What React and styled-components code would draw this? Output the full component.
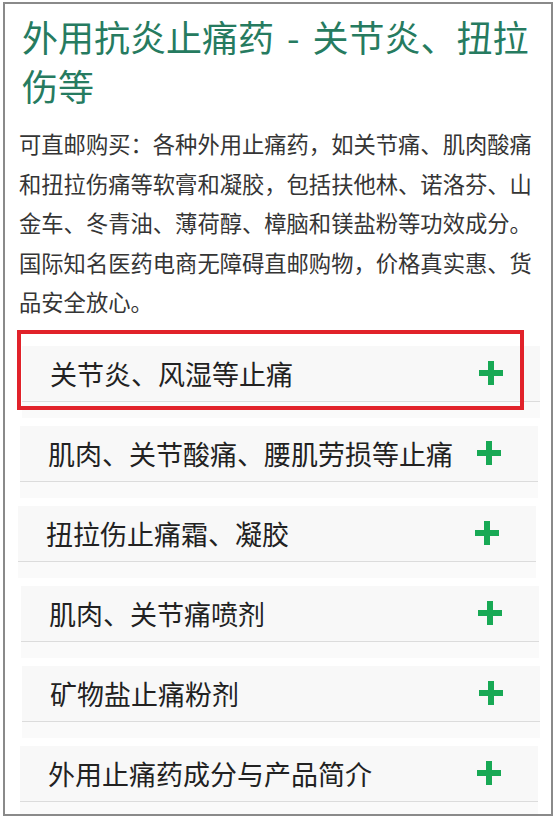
import React from 'react'
import styled, { createGlobalStyle } from 'styled-components'

const GlobalStyle = createGlobalStyle`
  html, body {
    margin: 0;
    padding: 0;
    background: #fff;
  }
  body {
    font-family: "Noto Sans CJK SC", "Noto Sans", sans-serif;
    font-feature-settings: "chws" 0, "halt" 0, "palt" 0;
    text-spacing-trim: space-all;
  }
`

const Frame = styled.div`
  box-sizing: border-box;
  width: 550px;
  height: 814px;
  margin: 2px 0 0 3px;
  border: 2px solid #8a8a8a;
  overflow: hidden;
  padding: 8px 0 0 14px;
`

const Title = styled.h1`
  margin: 0;
  padding-left: 3px;
  font-size: 36px;
  font-weight: 400;
  line-height: 49px;
  word-spacing: 5px;
  color: #267b60;
  width: 520px;
`

const Intro = styled.p`
  margin: 14px 0 0;
  font-size: 22.3px;
  line-height: 39.5px;
  color: #353535;
  width: 530px;
  white-space: nowrap;
`

const List = styled.div`
  margin-top: 24px;
  display: flex;
  flex-direction: column;
  gap: 8px;
`

const Item = styled.div`
  position: relative;
  width: 518px;
  margin-left: ${p => p.$shift || 0}px;
`

const Header = styled.div`
  height: 55px;
  display: flex;
  align-items: center;
  justify-content: space-between;
  padding: 0 37px 0 28px;
  background: #f8f8f8;
  border-bottom: 1px solid #dcdcdc;
  font-size: 27px;
  color: #222;
`

const Strip = styled.div`
  height: 16px;
  background: #fafafa;
`

const Highlight = styled.div`
  position: absolute;
  left: -5px;
  top: -16px;
  width: 507px;
  height: 80px;
  box-sizing: border-box;
  border: 4px solid #e1222a;
  pointer-events: none;
`

const Plus = () => (
  <svg width="24" height="24" viewBox="0 0 24 24">
    <rect x="9" y="0" width="6" height="24" fill="#18a955" />
    <rect x="0" y="9" width="24" height="6" fill="#18a955" />
  </svg>
)

const items = [
  { label: '关节炎、风湿等止痛', shift: 3, marked: true },
  { label: '肌肉、关节酸痛、腰肌劳损等止痛', shift: 1 },
  { label: '扭拉伤止痛霜、凝胶', shift: -1 },
  { label: '肌肉、关节痛喷剂', shift: 2 },
  { label: '矿物盐止痛粉剂', shift: 3 },
  { label: '外用止痛药成分与产品简介', shift: 1 },
]

const introLines = [
  '可直邮购买：各种外用止痛药，如关节痛、肌肉酸痛',
  '和扭拉伤痛等软膏和凝胶，包括扶他林、诺洛芬、山',
  '金车、冬青油、薄荷醇、樟脑和镁盐粉等功效成分。',
  '国际知名医药电商无障碍直邮购物，价格真实惠、货',
  '品安全放心。',
]

export default function App() {
  return (
    <>
      <GlobalStyle />
      <Frame lang="zh-CN">
        <Title>外用抗炎止痛药 - 关节炎、扭拉伤等</Title>
        <Intro>
          {introLines.map((line, i) => (
            <React.Fragment key={i}>
              {line}
              {i < introLines.length - 1 && <br />}
            </React.Fragment>
          ))}
        </Intro>
        <List>
          {items.map(it => (
            <Item key={it.label} $shift={it.shift}>
              <Header>
                <span>{it.label}</span>
                <Plus />
              </Header>
              <Strip />
              {it.marked && <Highlight />}
            </Item>
          ))}
        </List>
      </Frame>
    </>
  )
}
